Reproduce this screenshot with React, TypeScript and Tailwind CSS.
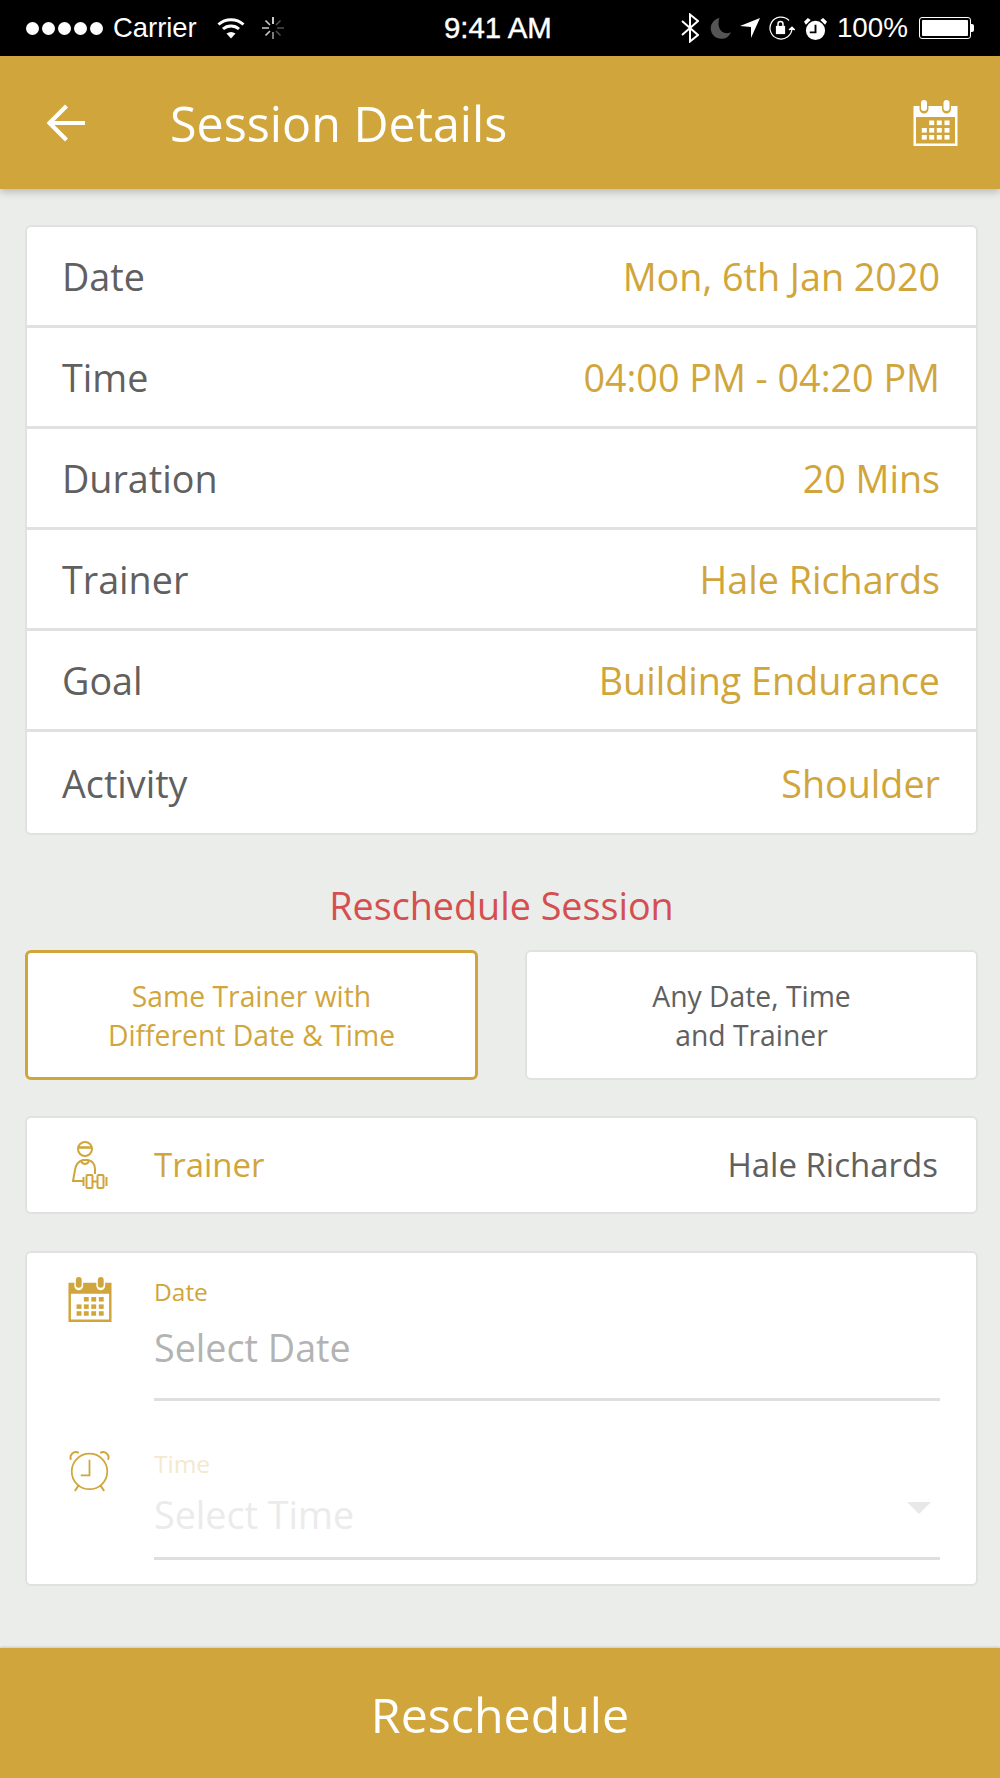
const GOLD = 'text-[#d0a63c]';

const ROWS = [
  ['Date', 'Mon, 6th Jan 2020'],
  ['Time', '04:00 PM - 04:20 PM'],
  ['Duration', '20 Mins'],
  ['Trainer', 'Hale Richards'],
  ['Goal', 'Building Endurance'],
  ['Activity', 'Shoulder'],
];

function CalendarIcon({ className }: { className?: string }) {
  const cells = [
    [15.7, 20.5], [23.3, 20.5], [31, 20.5],
    [8.300, 28], [15.7, 28], [23.3, 28], [31, 28],
    [8.300, 35], [15.7, 35], [23.3, 35], [31, 35],
  ];
  return (
    <svg viewBox="0 0 44 46" className={className} fill="currentColor">
      <path fillRule="evenodd" d="M0 6h6v3a4.500 4.500 0 0 0 9 0V6h13.500v3a4.500 4.500 0 0 0 9 0V6H44v40H0V6Zm2.500 11v26.500h39V17h-39Z" />
      <rect x="7.500" y="0" width="6" height="11" rx="3" />
      <rect x="30" y="0" width="6" height="11" rx="3" />
      {cells.map(([x, y]) => <rect key={`${x}-${y}`} x={x} y={y} width="5" height="4.600" />)}
    </svg>
  );
}

function AlarmIcon({ className }: { className?: string }) {
  return (
    <svg viewBox="0 0 42 44" className={className} fill="none" stroke="currentColor" strokeWidth="1.8">
      <circle cx="21" cy="23" r="18.2" />
      <path d="M21 11v16H12" />
      <path d="M2 11c-2-5 3-10 8-7M40 11c2-5-3-10-8-7" strokeWidth="2" />
      <path d="M10 37l-4 6M32 37l4 6" strokeWidth="2" />
    </svg>
  );
}

function TrainerIcon({ className }: { className?: string }) {
  return (
    <svg viewBox="0 0 36 48" className={className} fill="none" stroke="currentColor" strokeWidth="2">
      <circle cx="13" cy="8" r="7" />
      <path d="M6 6.500h14" strokeWidth="2.600" />
      <path d="M9 20c2 4 6 4 8 0" />
      <path d="M11 40H1l2-11c1-6 4-9 8-10h5c4 1 7 4 7 9v5" />
      <rect x="14.500" y="34" width="6" height="13" rx="1" />
      <rect x="25.500" y="34" width="6" height="13" rx="1" />
      <path d="M20.500 40.500h5M11.500 36v9M34.500 36v9" />
    </svg>
  );
}

function StatusBar() {
  return (
    <div className="relative flex h-[56px] items-center justify-between bg-black text-white font-['Liberation_Sans',sans-serif]">
      <div className="flex items-center pl-[26px]">
        <div className="flex gap-[3px]">
          {[0, 1, 2, 3, 4].map((i) => <span key={i} className="h-[13px] w-[13px] rounded-full bg-white" />)}
        </div>
        <span className="ml-[10px] text-[27.4px] leading-none">Carrier</span>
        <svg viewBox="0 0 28 22" className="ml-[20px] h-[22px] w-[28px]" fill="none" stroke="white" strokeWidth="3">
          <path d="M1.500 7.500c7-6.500 18-6.500 25 0M6 12c4.500-4 11.500-4 16 0" />
          <path d="M9.500 16.500c3-2 6-2 9 0L14 21.500Z" fill="white" stroke="none" />
        </svg>
        <svg viewBox="0 0 24 24" className="ml-[16px] h-[24px] w-[24px]" stroke="white" strokeWidth="1.600">
          <path d="M12 1v7" />
          <path d="M4.500 4.500l4.500 4.500M1 12h7M4.500 19.500l4.500-4.500" opacity=".8" />
          <path d="M12 16v7" opacity=".6" />
          <path d="M19.500 19.500l-4.500-4.500M23 12h-7M19.500 4.500l-4.500 4.500" opacity=".3" />
        </svg>
      </div>
      <span className="absolute left-[444px] top-[13px] text-[29.4px] leading-[30px] [-webkit-text-stroke:0.4px_white]">9:41 AM</span>
      <div className="flex items-center pr-[26px]">
        <svg viewBox="0 0 18 30" className="h-[30px] w-[18px]" fill="none" stroke="white" strokeWidth="2">
          <path d="M1 8l16 14-8 6.500V1.500L17 8 1 22" />
        </svg>
        <svg viewBox="0 0 22 22" className="ml-[11px] h-[21px] w-[21px]" fill="#555">
          <path d="M10 0a11 11 0 1 0 12 15C13 19 6 10 10 0Z" />
        </svg>
        <svg viewBox="0 0 20 20" className="ml-[9px] h-[20px] w-[20px]" fill="white">
          <path d="M20 0L11 20V9L0 8Z" />
        </svg>
        <svg viewBox="0 0 26 24" className="ml-[9px] h-[24px] w-[26px]" fill="none" stroke="white" strokeWidth="1.200">
          <path d="M23 12a11 11 0 1 1-3-7.500" />
          <path d="M20 14l3-3 3 3" fill="white" />
          <rect x="7.500" y="10.500" width="8" height="7" fill="white" />
          <path d="M9 10.500V8a2.500 2.500 0 0 1 5 0v2.500" strokeWidth="1.500" />
        </svg>
        <svg viewBox="0 0 24 24" className="ml-[9px] h-[23px] w-[23px]" fill="white">
          <path fillRule="evenodd" d="M12 4a10 10 0 1 1 0 20 10 10 0 0 1 0-20Zm-1 4v7H6v2h7V8h-2Z" />
          <path d="M0 5l4-4 3 2-5 5ZM24 5l-4-4-3 2 5 5Z" />
        </svg>
        <span className="ml-[10px] text-[27.8px] leading-none">100%</span>
        <div className="ml-[11px] flex items-center">
          <div className="h-[22px] w-[52px] rounded-[3px] border border-white p-[2px]">
            <div className="h-full w-full rounded-[1px] bg-white" />
          </div>
          <div className="h-[8px] w-[3px] rounded-r-[2px] bg-white" />
        </div>
      </div>
    </div>
  );
}

export default function App() {
  return (
    <div className="flex h-[1778px] w-[1000px] flex-col bg-[#ebedeb] font-['Open_Sans',sans-serif]">
      <StatusBar />
      <header className="flex h-[133px] items-center justify-between bg-[#d0a63c] pl-[47px] pr-[42px] text-white shadow-[0_3px_8px_rgba(0,0,0,0.22)]">
        <div className="flex items-center">
          <svg viewBox="0 0 38 38" className="h-[38px] w-[38px]" fill="none" stroke="currentColor" strokeWidth="4.200">
            <path d="M38 19H3M19.500 2L2.500 19l17 17" />
          </svg>
          <h1 className="ml-[85px] pt-[2px] text-[48.4px] font-normal leading-none">Session Details</h1>
        </div>
        <CalendarIcon className="h-[46px] w-[45px]" />
      </header>

      <main className="flex-1 pl-[25px] pr-[22px] pt-[36px]">
        <section className="divide-y-[3px] divide-[#e0e1e0] rounded-[6px] border-[2px] border-[#e0e1e0] bg-white">
          {ROWS.map(([label, value]) => (
            <div key={label} className="flex h-[101px] items-center justify-between pl-[35px] pr-[36px] pt-[3px] text-[37.7px]">
              <span className="text-[#606060]">{label}</span>
              <span className={GOLD}>{value}</span>
            </div>
          ))}
        </section>

        <h2 className="mt-[47px] text-center text-[37.7px] leading-[48px] text-[#d64f50]">Reschedule Session</h2>

        <div className="mt-[20px] grid grid-cols-2 gap-[47px]">
          <button className={`h-[130px] rounded-[6px] border-[3px] border-[#d0a63c] bg-white pt-[2px] text-[28.3px] leading-[39px] ${GOLD}`}>
            Same Trainer with<br />Different Date &amp; Time
          </button>
          <button className="h-[130px] rounded-[6px] border-[2px] border-[#e0e1e0] bg-white pt-[2px] text-[28.3px] leading-[39px] text-[#606060]">
            Any Date, Time<br />and Trainer
          </button>
        </div>

        <section className="mt-[36px] flex h-[98px] items-center justify-between rounded-[6px] border-[2px] border-[#e0e1e0] bg-white pl-[45px] pr-[38px]">
          <div className="flex items-center">
            <TrainerIcon className={`h-[48px] w-[36px] ${GOLD}`} />
            <span className={`ml-[46px] text-[33px] ${GOLD}`}>Trainer</span>
          </div>
          <span className="text-[33px] text-[#606060]">Hale Richards</span>
        </section>

        <section className="mt-[37px] h-[335px] rounded-[6px] border-[2px] border-[#e0e1e0] bg-white pl-[41px] pr-[36px] pt-[23px]">
          <div className="flex">
            <CalendarIcon className={`mt-[1px] h-[45px] w-[44px] shrink-0 ${GOLD}`} />
            <div className="ml-[42px] flex-1">
              <div className={`text-[24.5px] leading-[32px] ${GOLD}`}>Date</div>
              <div className="mt-[14px] h-[79px] border-b-[3px] border-[#dfdfdf] pt-[1px] text-[37.7px] leading-[50px] text-[#b3b3b3]">Select Date</div>
            </div>
          </div>
          <div className="mt-[47px] flex">
            <AlarmIcon className={`ml-[1px] mt-[1px] h-[43px] w-[41px] shrink-0 ${GOLD}`} />
            <div className="ml-[44px] flex-1">
              <div className="text-[24.5px] leading-[32px] text-[#f4e8cf]">Time</div>
              <div className="relative mt-[10px] h-[70px] border-b-[3px] border-[#dfdfdf] text-[37.7px] leading-[50px] text-[#ebebeb]">
                Select Time
                <span className="absolute right-[9px] top-[12px] h-0 w-0 border-x-[12px] border-t-[12px] border-x-transparent border-t-[#e8e8e8]" />
              </div>
            </div>
          </div>
        </section>
      </main>

      <button className="h-[130px] bg-[#d0a63c] pt-[3px] text-[48.3px] text-white shadow-[0_-1px_2px_rgba(0,0,0,0.15)]">Reschedule</button>
    </div>
  );
}
